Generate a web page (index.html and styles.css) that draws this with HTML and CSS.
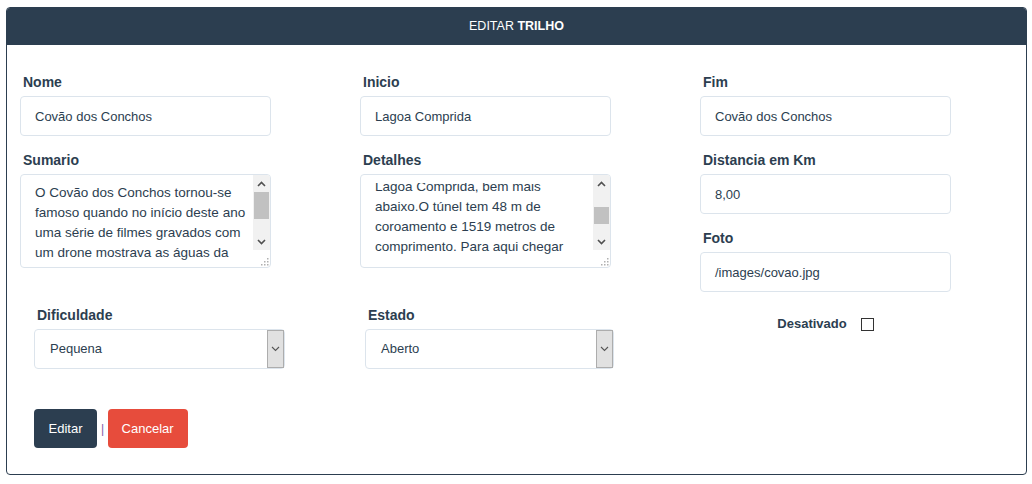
FILE: index.html
```
<!DOCTYPE html>
<html lang="pt">
<head>
<meta charset="utf-8">
<title>Editar Trilho</title>
<link rel="stylesheet" href="styles.css">
</head>
<body>
<div class="card">
  <div class="card-header">EDITAR <b>TRILHO</b></div>
  <div class="card-body">
    <div class="grid">
      <div class="col">
        <label class="lbl">Nome</label>
        <div class="input">Covão dos Conchos</div>
        <label class="lbl">Sumario</label>
        <div class="ta">
          <div class="ta-text">
            <div class="ta-inner">
              <div>O Covão dos Conchos tornou-se</div>
              <div>famoso quando no início deste ano</div>
              <div>uma série de filmes gravados com</div>
              <div>um drone mostrava as águas da</div>
            </div>
          </div>
          <div class="sb">
            <div class="sb-btn"><svg width="9" height="6" viewBox="0 0 9 6"><path d="M1 5 L4.5 1.5 L8 5" fill="none" stroke="#505050" stroke-width="1.6"/></svg></div>
            <div class="sb-track"><div class="sb-thumb thumb-a"></div></div>
            <div class="sb-btn"><svg width="9" height="6" viewBox="0 0 9 6"><path d="M1 1 L4.5 4.5 L8 1" fill="none" stroke="#505050" stroke-width="1.6"/></svg></div>
            <div class="sb-grip"><svg width="9" height="9" viewBox="0 0 9 9"><g fill="#b0b0b0"><rect x="7" y="1" width="1.5" height="1.5"/><rect x="4" y="4" width="1.5" height="1.5"/><rect x="7" y="4" width="1.5" height="1.5"/><rect x="1" y="7" width="1.5" height="1.5"/><rect x="4" y="7" width="1.5" height="1.5"/><rect x="7" y="7" width="1.5" height="1.5"/></g></svg></div>
          </div>
        </div>
      </div>
      <div class="col">
        <label class="lbl">Inicio</label>
        <div class="input">Lagoa Comprida</div>
        <label class="lbl">Detalhes</label>
        <div class="ta">
          <div class="ta-text">
            <div class="ta-inner scrolled">
              <div>Lagoa Comprida, bem mais</div>
              <div>abaixo.O túnel tem 48 m de</div>
              <div>coroamento e 1519 metros de</div>
              <div>comprimento. Para aqui chegar</div>
            </div>
          </div>
          <div class="sb">
            <div class="sb-btn"><svg width="9" height="6" viewBox="0 0 9 6"><path d="M1 5 L4.5 1.5 L8 5" fill="none" stroke="#505050" stroke-width="1.6"/></svg></div>
            <div class="sb-track"><div class="sb-thumb thumb-b"></div></div>
            <div class="sb-btn"><svg width="9" height="6" viewBox="0 0 9 6"><path d="M1 1 L4.5 4.5 L8 1" fill="none" stroke="#505050" stroke-width="1.6"/></svg></div>
            <div class="sb-grip"><svg width="9" height="9" viewBox="0 0 9 9"><g fill="#b0b0b0"><rect x="7" y="1" width="1.5" height="1.5"/><rect x="4" y="4" width="1.5" height="1.5"/><rect x="7" y="4" width="1.5" height="1.5"/><rect x="1" y="7" width="1.5" height="1.5"/><rect x="4" y="7" width="1.5" height="1.5"/><rect x="7" y="7" width="1.5" height="1.5"/></g></svg></div>
          </div>
        </div>
      </div>
      <div class="col">
        <label class="lbl">Fim</label>
        <div class="input">Covão dos Conchos</div>
        <label class="lbl">Distancia em Km</label>
        <div class="input">8,00</div>
        <label class="lbl">Foto</label>
        <div class="input">/images/covao.jpg</div>
      </div>
    </div>

    <div class="row2">
      <div class="grp grp1">
        <label class="lbl">Dificuldade</label>
        <div class="select">
          <span class="select-val">Pequena</span>
          <span class="select-btn"><svg width="9" height="6" viewBox="0 0 9 6"><path d="M1 1 L4.5 4.5 L8 1" fill="none" stroke="#555" stroke-width="1.1"/></svg></span>
        </div>
      </div>
      <div class="grp grp2">
        <label class="lbl">Estado</label>
        <div class="select">
          <span class="select-val">Aberto</span>
          <span class="select-btn"><svg width="9" height="6" viewBox="0 0 9 6"><path d="M1 1 L4.5 4.5 L8 1" fill="none" stroke="#555" stroke-width="1.1"/></svg></span>
        </div>
      </div>
      <div class="grp grp3">
        <span class="chk-lbl">Desativado</span>
        <span class="chk"></span>
      </div>
    </div>

    <div class="actions">
      <button class="btn btn-dark">Editar</button>
      <span class="sep">|</span>
      <button class="btn btn-red">Cancelar</button>
    </div>
  </div>
</div>
</body>
</html>
```
FILE: styles.css
```
* { box-sizing: border-box; }
html, body { margin: 0; padding: 0; background: #fff; }
body {
  font-family: "Liberation Sans", Arial, sans-serif;
  color: #2c3e50;
  padding: 7px 5px 0 6px;
}
.card {
  width: 1021px;
  height: 468px;
  border: 1px solid #2c3e50;
  border-radius: 4px;
  overflow: hidden;
}
.card-header {
  background: #2c3e50;
  color: #fff;
  height: 38px;
  line-height: 37px;
  text-align: center;
  font-size: 12.5px;
  margin: -1px -1px 0 -1px;
  padding-top: 1px;
}
.card-header b { font-weight: bold; }
.card-body {
  padding: 27px 0 0 13px;
}
.grid {
  display: grid;
  grid-template-columns: 251px 251px 251px;
  column-gap: 89px;
  align-items: start;
}
.col { display: flex; flex-direction: column; }
.lbl {
  display: block;
  font-size: 14px;
  font-weight: bold;
  line-height: 20px;
  height: 20px;
  padding-left: 3px;
  margin-bottom: 4px;
}
.input {
  height: 40px;
  border: 1px solid #dce4ec;
  border-radius: 4px;
  padding-left: 14px;
  font-size: 13px;
  line-height: 39px;
  margin-bottom: 14px;
  white-space: nowrap;
  overflow: hidden;
}
.col .input:last-child { margin-bottom: 0; }
.ta {
  height: 94px;
  border: 1px solid #dce4ec;
  border-radius: 4px;
  display: flex;
  overflow: hidden;
}
.ta-text {
  flex: 1;
  overflow: hidden;
  margin-top: 8px;
  padding-left: 14px;
  font-size: 13.5px;
  line-height: 20px;
  white-space: nowrap;
}
.ta-inner.scrolled { margin-top: -6px; }
.sb {
  width: 17px;
  display: flex;
  flex-direction: column;
}
.sb-btn {
  height: 17px;
  background: #f1f1f1;
  display: flex;
  align-items: center;
  justify-content: center;
}
.sb-track {
  height: 41px;
  background: #f1f1f1;
  display: flex;
  flex-direction: column;
}
.sb-thumb {
  background: #c1c1c1;
  margin: 0 1px;
}
.thumb-a { height: 27px; }
.thumb-b { height: 17px; margin-top: 15px; }
.sb-grip {
  flex: 1;
  display: flex;
  align-items: flex-end;
  justify-content: flex-end;
  padding: 0 1px 1px 0;
}
.row2 {
  display: flex;
  align-items: flex-start;
  margin-top: 13px;
}
.grp1 { width: 251px; margin-left: 14px; }
.grp2 { width: 249px; margin-left: 80px; }
.grp3 {
  width: 251px;
  margin-left: 86px;
  margin-top: 9px;
  display: flex;
  justify-content: center;
  align-items: center;
  height: 20px;
}
.select {
  height: 40px;
  border: 1px solid #dce4ec;
  border-radius: 4px;
  display: flex;
  align-items: stretch;
}
.select-val {
  flex: 1;
  padding-left: 15px;
  font-size: 13px;
  line-height: 38px;
}
.select-btn {
  width: 17px;
  background: #e1e1e1;
  border: 1px solid #adadad;
  display: flex;
  align-items: center;
  justify-content: center;
}
.chk-lbl {
  font-size: 13px;
  font-weight: bold;
  margin-right: 14px;
  line-height: 20px;
}
.chk {
  width: 13px;
  height: 13px;
  border: 1px solid #333;
  background: #fff;
}
.actions {
  display: flex;
  align-items: center;
  margin-top: 40px;
  margin-left: 14px;
}
.btn {
  font-family: "Liberation Sans", Arial, sans-serif;
  font-size: 13px;
  color: #fff;
  border: none;
  border-radius: 4px;
  height: 39px;
  padding: 0;
  cursor: pointer;
}
.btn-dark { background: #2c3e50; width: 63px; }
.btn-red { background: #e74c3c; width: 80px; }
.sep {
  color: #7d5aa6;
  font-size: 12px;
  margin: 0 3.5px 0 4px;
}
```
